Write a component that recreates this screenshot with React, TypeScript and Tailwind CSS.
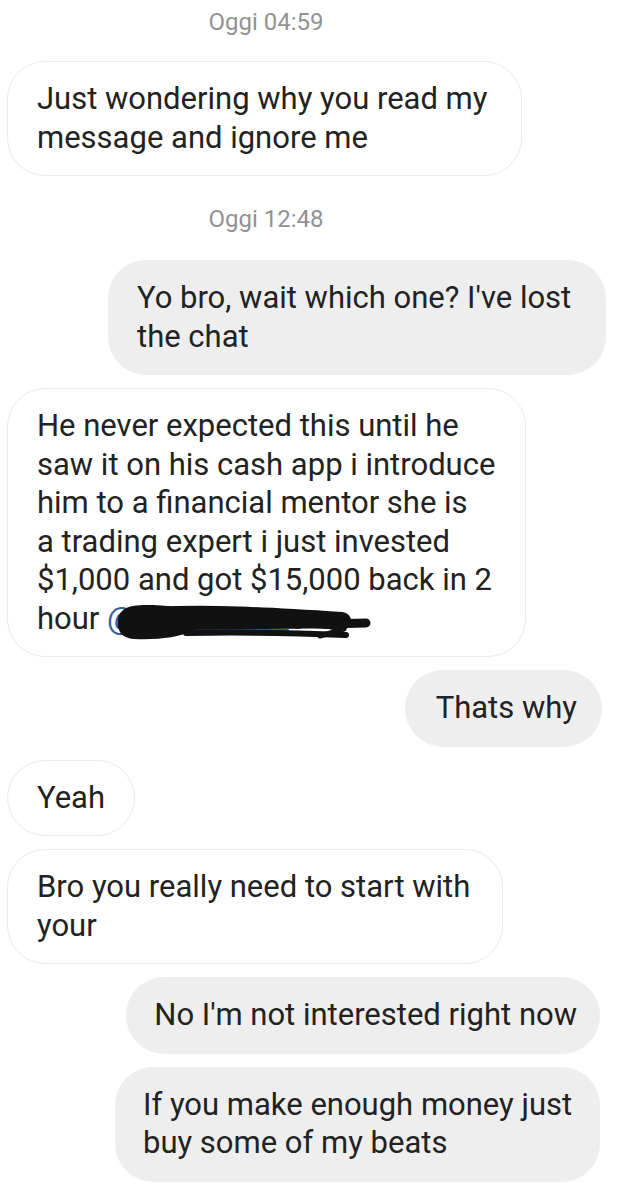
import React from "react";

const font = { fontFamily: "Roboto, 'Noto Sans', Arial, sans-serif" };

const Stamp = ({ children, cls = "" }: { children: React.ReactNode; cls?: string }) => (
  <div className={`flex justify-center pr-[98px] ${cls}`}>
    <span className="text-[24px] leading-[28px] text-[#929292]">{children}</span>
  </div>
);

const Left = ({ children, cls = "" }: { children: React.ReactNode; cls?: string }) => (
  <div className="flex justify-start pl-[7px]">
    <div
      className={`relative whitespace-nowrap rounded-[38px] border border-[#ebebeb] bg-white py-[18px] pl-[29px] text-[31px] leading-[38.5px] text-[#222] ${cls}`}
    >
      {children}
    </div>
  </div>
);

const Right = ({ children, cls = "" }: { children: React.ReactNode; cls?: string }) => (
  <div className="flex justify-end">
    <div
      className={`whitespace-nowrap rounded-[38px] bg-[#eeeeee] py-[19px] text-[31px] leading-[38.5px] text-[#222] ${cls}`}
    >
      {children}
    </div>
  </div>
);

export default function App() {
  return (
    <div className="min-h-[1200px] w-[630px] bg-white" style={font}>
      <Stamp cls="pt-[8px] pb-[25px]">Oggi 04:59</Stamp>
      <Left cls="w-[515px]">
        Just wondering why you read my
        <br />
        message and ignore me
      </Left>
      <Stamp cls="pt-[29px] pb-[27px]">Oggi 12:48</Stamp>
      <div className="flex flex-col gap-[13px]">
        <Right cls="mr-[24px] w-[498px] pl-[29px]">
          Yo bro, wait which one? I've lost
          <br />
          the chat
        </Right>
        <Left cls="w-[519px]">
          He never expected this until he
          <br />
          saw it on his cash app i introduce
          <br />
          him to a financial mentor she is
          <br />
          a trading expert i just invested
          <br />
          $1,000 and got $15,000 back in 2
          <br />
          hour <span className="text-[#2f5f9e]">@</span>
          <span className="text-[#2f5f9e]">___________o</span>
          <svg
            className="absolute left-[108px] top-[213px]"
            width="258"
            height="40"
            viewBox="0 0 258 40"
            fill="none"
          >
            <path
              d="M2 18 C3 7 12 3 30 3 C52 3 66 5 76 10 L78 28 C62 36 40 38 18 37 C6 36 1 30 2 18 Z"
              fill="#111"
            />
            <path
              d="M40 14 C90 11 150 14 226 19"
              stroke="#111"
              strokeWidth="18"
              strokeLinecap="round"
            />
            <path
              d="M60 24 C110 22 170 23 250 21"
              stroke="#111"
              strokeWidth="9"
              strokeLinecap="round"
            />
            <path
              d="M70 31 C120 30 180 31 230 33"
              stroke="#111"
              strokeWidth="6"
              strokeLinecap="round"
            />
            <path
              d="M150 14 L228 27 L204 34"
              stroke="#111"
              strokeWidth="5"
              strokeLinecap="round"
              strokeLinejoin="round"
            />
          </svg>
        </Left>
        <Right cls="mr-[28px] pl-[31px] pr-[25px]">Thats why</Right>
        <Left cls="pr-[29px]">Yeah</Left>
        <Left cls="w-[496px]">
          Bro you really need to start with
          <br />
          your
        </Left>
        <Right cls="mr-[30px] pl-[28px] pr-[23px]">No I'm not interested right now</Right>
        <Right cls="mr-[30px] w-[485px] pl-[28px]">
          If you make enough money just
          <br />
          buy some of my beats
        </Right>
      </div>
    </div>
  );
}
